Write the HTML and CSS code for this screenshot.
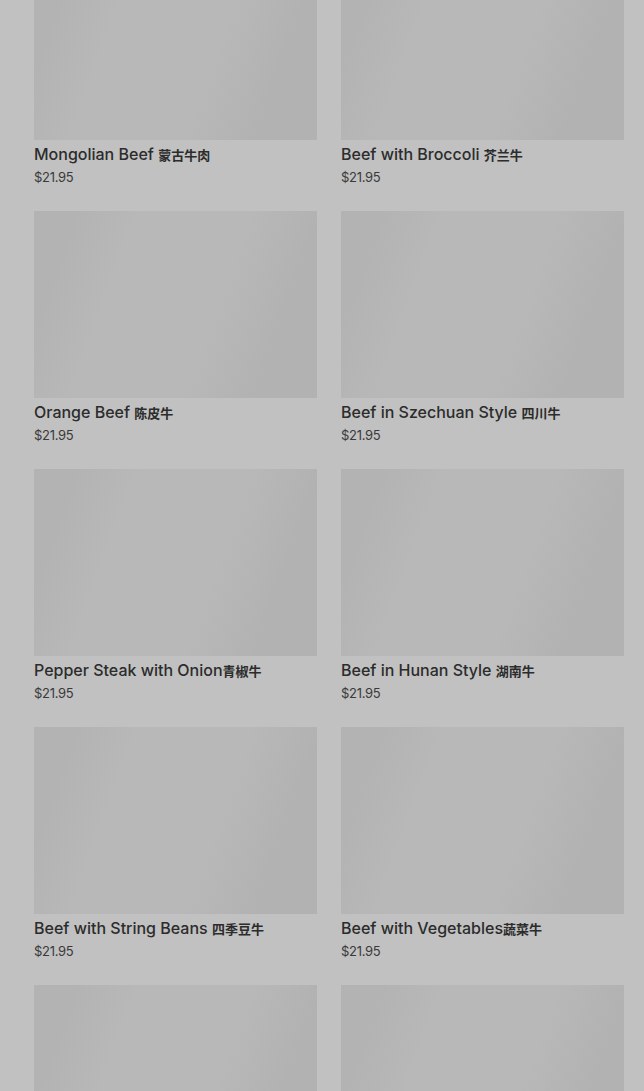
FILE: index.html
```html
<!DOCTYPE html>
<html lang="en">
<head>
<meta charset="utf-8">
<title>Beef</title>
<link rel="stylesheet" href="styles.css">
</head>
<body>
<main class="menu-grid">
  <article class="item"><div class="thumb"></div><h3 class="name">Mongolian Beef <span class="zh">蒙古牛肉</span></h3><p class="price">$21.95</p></article>
  <article class="item"><div class="thumb"></div><h3 class="name">Beef with Broccoli <span class="zh">芥兰牛</span></h3><p class="price">$21.95</p></article>
  <article class="item"><div class="thumb"></div><h3 class="name">Orange Beef <span class="zh">陈皮牛</span></h3><p class="price">$21.95</p></article>
  <article class="item"><div class="thumb"></div><h3 class="name">Beef in Szechuan Style <span class="zh">四川牛</span></h3><p class="price">$21.95</p></article>
  <article class="item"><div class="thumb"></div><h3 class="name">Pepper Steak with Onion<span class="zh">青椒牛</span></h3><p class="price">$21.95</p></article>
  <article class="item"><div class="thumb"></div><h3 class="name">Beef in Hunan Style <span class="zh">湖南牛</span></h3><p class="price">$21.95</p></article>
  <article class="item"><div class="thumb"></div><h3 class="name">Beef with String Beans <span class="zh">四季豆牛</span></h3><p class="price">$21.95</p></article>
  <article class="item"><div class="thumb"></div><h3 class="name">Beef with Vegetables<span class="zh">蔬菜牛</span></h3><p class="price">$21.95</p></article>
  <article class="item"><div class="thumb"></div></article>
  <article class="item"><div class="thumb"></div></article>
</main>
</body>
</html>
```

FILE: styles.css
```css
html, body {
  margin: 0;
  padding: 0;
  background: #c1c1c1;
  overflow: hidden;
}
body {
  font-family: Inter, "Noto Sans", "Noto Sans CJK SC", sans-serif;
  color: #2f2f2f;
}
.menu-grid {
  display: grid;
  grid-template-columns: 283px 283px;
  column-gap: 24px;
  row-gap: 25px;
  padding: 0 20px 0 34px;
  margin-top: -47px;
}
.item {
  display: flex;
  flex-direction: column;
}
.thumb {
  height: 187px;
  background: linear-gradient(110deg, #b3b3b3 0%, #b3b3b3 12%, #b8b8b8 30%, #b8b8b8 62%, #b2b2b2 82%, #b2b2b2 100%);
}
.name {
  margin: 4px 0 0;
  height: 20px;
  font-size: 16px;
  line-height: 20px;
  font-weight: 500;
  color: #2c2c2c;
  letter-spacing: 0;
  white-space: nowrap;
}
.zh {
  font-family: "Noto Sans CJK SC", sans-serif;
  font-weight: 700;
  font-size: 13px;
  line-height: 1;
}
.price {
  margin: 4px 0 0;
  font-size: 13px;
  line-height: 18px;
  font-weight: 400;
  color: #3a3a3a;
  letter-spacing: -0.3px;
}
```
